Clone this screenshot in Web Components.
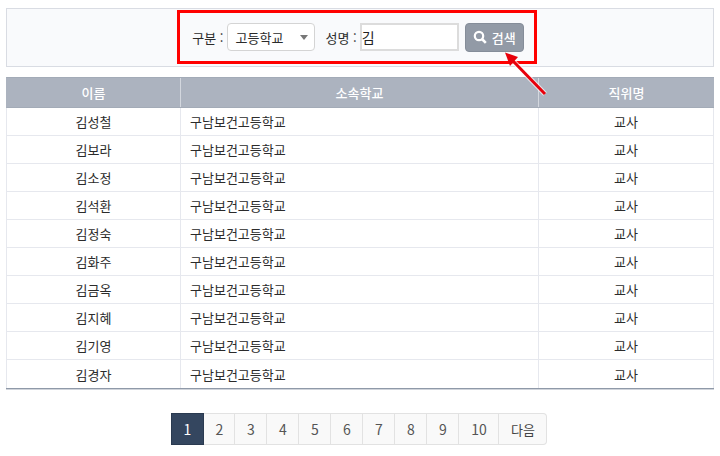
<!DOCTYPE html>
<html lang="ko">
<head>
<meta charset="utf-8">
<title>검색</title>
<style>
  html, body { margin: 0; padding: 0; background: #fff; }
  body { font-family: "Noto Sans CJK KR", "Noto Sans", sans-serif; color: #2b2b2b; width: 720px; height: 456px; overflow: hidden; }
  #page { position: relative; display: flex; flex-direction: column; padding: 8px 6px 0; box-sizing: border-box; height: 456px; }
</style>
</head>
<body>
<div id="page">
  <search-bar></search-bar>
  <staff-table></staff-table>
  <page-nav></page-nav>
  <call-out></call-out>
</div>

<template id="search-bar-tpl">
  <style>
    :host { display: flex; justify-content: center; align-items: center; box-sizing: border-box; height: 59px; padding: 0 4px 1px 0; background: #f9fafc; border: 1px solid #d9dce3; font-size: 13px; color: #2b2b2b; }
    label { margin-right: 3px; }
    .select { box-sizing: border-box; width: 88px; height: 28px; display: flex; align-items: center; justify-content: space-between; padding: 0 8px; background: #fff; border: 1px solid #d4d4d4; border-radius: 4px; margin-right: 11px; }
    .select i { width: 0; height: 0; border-left: 4px solid transparent; border-right: 4px solid transparent; border-top: 5px solid #777; margin-right: -2px; }
    .input { box-sizing: border-box; width: 99px; height: 28px; display: flex; align-items: center; background: #fff; border: 2px solid #dcdcdc; color: #222; font-size: 14px; margin-right: 6px; }
    button { box-sizing: border-box; width: 59px; height: 29px; display: flex; align-items: center; justify-content: center; gap: 5px; padding: 0; font: inherit; font-weight: 500; color: #fff; background: #929aa6; border: 1px solid #858d99; border-radius: 4px; }
    svg { display: block; }
  </style>
  <label>구분 :</label>
  <div class="select"><span>고등학교</span><i></i></div>
  <label>성명 :</label>
  <div class="input">김</div>
  <button>
    <svg width="14" height="14" viewBox="0 0 14 14" fill="none" stroke="#fff"><circle cx="6" cy="6" r="4.2" stroke-width="2.2"/><path d="M9 9L12.8 12.8" stroke-width="2.6"/></svg>
    <span>검색</span>
  </button>
</template>

<template id="staff-table-tpl">
  <style>
    :host { display: block; margin-top: 10px; font-size: 13px; color: #2b2b2b; border-bottom: 1px solid #8f99a8; box-shadow: 0 1px 0 #d0d4db; }
    .row { display: grid; grid-template-columns: 174px 358px 1fr; height: 28px; box-sizing: border-box; border: 1px solid #e6e8ee; border-width: 0 1px 1px; }
    .row:last-child { border-bottom: 0; }
    .row > div { display: flex; align-items: center; justify-content: center; border-right: 1px solid #e6e8ee; }
    .row > div:last-child { border-right: 0; }
    .row > .school { justify-content: flex-start; padding-left: 9px; }
    .head { height: 31px; background: #acb3bf; color: #fff; font-weight: 500; border-color: #acb3bf; border-width: 1px 0 1px 1px; border-top-color: #a3abb7; border-bottom-color: #a3abb7; }
    .head > div { padding-bottom: 1px; border-right: 1px solid #d3d7de; }
  </style>
  <div class="row head"><div>이름</div><div>소속학교</div><div>직위명</div></div>
  <div id="rows"></div>
</template>

<template id="page-nav-tpl">
  <style>
    :host { display: flex; justify-content: center; margin-top: 24px; padding-right: 2px; font-size: 14px; color: #555; }
    #links { display: flex; }
    a { box-sizing: border-box; height: 32px; width: 32px; padding-left: 1px; display: flex; align-items: center; justify-content: center; background: #f9f9f9; border: 1px solid #e2e2e2; border-left: 0; }
    a.on { width: 33px; padding-left: 0; background: #34465f; border: 1px solid #2a3a50; color: #fff; }
    a.two { width: 31px; }
    a.wide { width: 40px; }
    a.next { width: 48px; font-size: 13px; color: #444; border-radius: 0 4px 4px 0; }
  </style>
  <div id="links"></div>
</template>

<template id="call-out-tpl">
  <style>
    :host { display: block; position: absolute; left: 177px; top: 10px; }
    .box { box-sizing: border-box; width: 360px; height: 54px; border: 3px solid #f00; }
    svg { position: absolute; left: 0; top: 0; overflow: visible; }
  </style>
  <div class="box"></div>
  <svg width="400" height="100" viewBox="0 0 400 100">
    <path d="M368 84L336 51" stroke="#fff" stroke-opacity=".7" stroke-width="5" fill="none"/>
    <path d="M368 84L336 51" stroke="#e8000b" stroke-width="3" fill="none"/>
    <path d="M328 42.5L341 47L333 56Z" fill="#e8000b"/>
  </svg>
</template>

<script>
  function mount(el, id) {
    el.attachShadow({ mode: 'open' });
    el.shadowRoot.appendChild(document.getElementById(id).content.cloneNode(true));
  }

  class SearchBar extends HTMLElement {
    constructor() { super(); mount(this, 'search-bar-tpl'); }
  }

  const names = ['김성철', '김보라', '김소정', '김석환', '김정숙', '김화주', '김금옥', '김지혜', '김기영', '김경자'];

  class StaffTable extends HTMLElement {
    constructor() {
      super();
      mount(this, 'staff-table-tpl');
      this.shadowRoot.getElementById('rows').innerHTML = names.map(n =>
        `<div class="row"><div>${n}</div><div class="school">구남보건고등학교</div><div>교사</div></div>`).join('');
    }
  }

  class PageNav extends HTMLElement {
    constructor() {
      super();
      mount(this, 'page-nav-tpl');
      let html = '';
      for (let i = 1; i <= 10; i++) {
        let cls = i == 1 ? 'on' : i == 2 ? 'two' : i == 10 ? 'wide' : '';
        html += `<a class="${cls}">${i}</a>`;
      }
      this.shadowRoot.getElementById('links').innerHTML = html + '<a class="next">다음</a>';
    }
  }

  class CallOut extends HTMLElement {
    constructor() { super(); mount(this, 'call-out-tpl'); }
  }

  customElements.define('search-bar', SearchBar);
  customElements.define('staff-table', StaffTable);
  customElements.define('page-nav', PageNav);
  customElements.define('call-out', CallOut);
</script>
</body>
</html>
